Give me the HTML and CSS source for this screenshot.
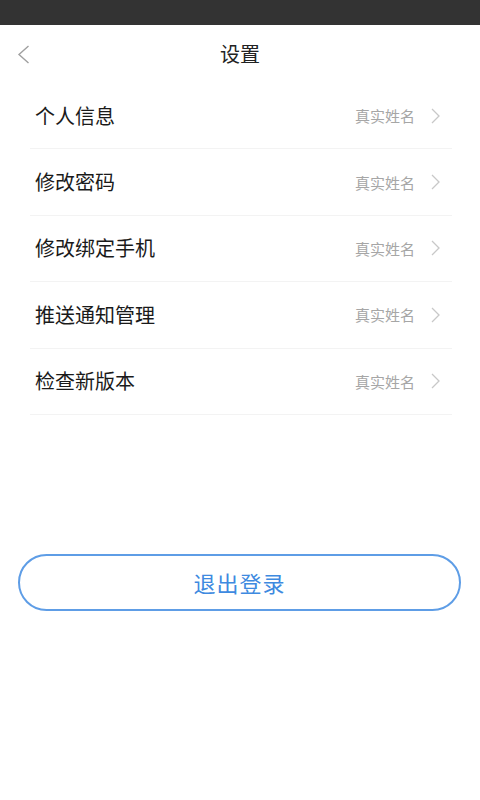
FILE: index.html
```html
<!DOCTYPE html>
<html lang="zh-CN">
<head>
<meta charset="utf-8">
<title>设置</title>
<link rel="stylesheet" href="styles.css">
</head>
<body>
<div class="statusbar"></div>
<header class="header">
  <span class="back">
    <svg width="13" height="19" viewBox="0 0 13 19"><path d="M11.5 1 L2 9.5 L11.5 18" fill="none" stroke="#a0a0a0" stroke-width="1.4"/></svg>
  </span>
  <h1 class="title">设置</h1>
</header>
<ul class="list">
  <li class="row"><span class="label">个人信息</span><span class="value">真实姓名</span><svg class="chev" width="9" height="16" viewBox="0 0 9 16"><path d="M1 1 L8 8 L1 15" fill="none" stroke="#c8c8c8" stroke-width="1.3"/></svg></li>
  <li class="row"><span class="label">修改密码</span><span class="value">真实姓名</span><svg class="chev" width="9" height="16" viewBox="0 0 9 16"><path d="M1 1 L8 8 L1 15" fill="none" stroke="#c8c8c8" stroke-width="1.3"/></svg></li>
  <li class="row"><span class="label">修改绑定手机</span><span class="value">真实姓名</span><svg class="chev" width="9" height="16" viewBox="0 0 9 16"><path d="M1 1 L8 8 L1 15" fill="none" stroke="#c8c8c8" stroke-width="1.3"/></svg></li>
  <li class="row"><span class="label">推送通知管理</span><span class="value">真实姓名</span><svg class="chev" width="9" height="16" viewBox="0 0 9 16"><path d="M1 1 L8 8 L1 15" fill="none" stroke="#c8c8c8" stroke-width="1.3"/></svg></li>
  <li class="row"><span class="label">检查新版本</span><span class="value">真实姓名</span><svg class="chev" width="9" height="16" viewBox="0 0 9 16"><path d="M1 1 L8 8 L1 15" fill="none" stroke="#c8c8c8" stroke-width="1.3"/></svg></li>
</ul>
<div class="actions">
  <button class="logout">退出登录</button>
</div>
</body>
</html>
```
FILE: styles.css
```css
* { box-sizing: border-box; }
html, body {
  margin: 0;
  padding: 0;
  background: #ffffff;
  font-family: "Noto Sans CJK SC", "Noto Sans", sans-serif;
}
.statusbar {
  height: 25px;
  background: #333333;
}
.header {
  height: 58px;
  display: flex;
  align-items: center;
  justify-content: center;
  position: relative;
}
.back {
  position: absolute;
  left: 17px;
  top: 20px;
  display: flex;
}
.title {
  margin: 0;
  font-size: 20px;
  font-weight: 400;
  color: #222222;
  line-height: 1;
}
.list {
  list-style: none;
  margin: 0 28px 0 30px;
  padding: 0;
}
.row {
  height: 66.4px;
  display: flex;
  align-items: center;
  border-bottom: 1px solid #f3f3f3;
  padding: 0 12px 0 5px;
}
.label {
  flex: 1;
  font-size: 20px;
  color: #1a1a1a;
  line-height: 1;
}
.value {
  font-size: 15px;
  color: #a6a6a6;
  line-height: 1;
}
.chev {
  margin-left: 16px;
  display: block;
}
.actions {
  padding: 139px 19px 0 18px;
}
.logout {
  display: block;
  width: 100%;
  height: 57px;
  border: 2px solid #5e9de6;
  border-radius: 29px;
  background: #ffffff;
  color: #3e8ae0;
  font-family: "Noto Sans CJK SC", "Noto Sans", sans-serif;
  font-size: 22px;
  letter-spacing: 1px;
  padding: 0;
}
```
